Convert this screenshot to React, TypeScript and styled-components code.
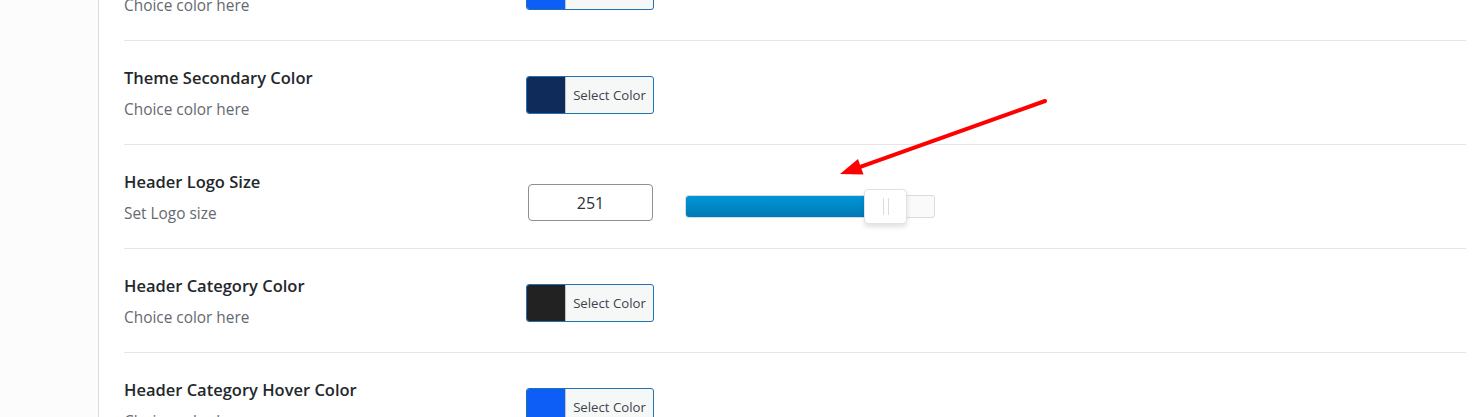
import styled, { createGlobalStyle } from "styled-components";

const GlobalStyle = createGlobalStyle`
  html, body {
    margin: 0;
    padding: 0;
    background: #ffffff;
    overflow: hidden;
  }
  body {
    font-family: "Open Sans", "Noto Sans", sans-serif;
    color: #333;
  }
`;

type ColorRow = { kind: "color"; title: string; sub: string; color: string };
type SizeRow = { kind: "size"; title: string; sub: string; value: number; max: number };
type Row = ColorRow | SizeRow;

const rows: Row[] = [
  { kind: "color", title: "Theme Primary Color", sub: "Choice color here", color: "#0d5ef7" },
  { kind: "color", title: "Theme Secondary Color", sub: "Choice color here", color: "#0f2b59" },
  { kind: "size", title: "Header Logo Size", sub: "Set Logo size", value: 251, max: 347 },
  { kind: "color", title: "Header Category Color", sub: "Choice color here", color: "#222222" },
  { kind: "color", title: "Header Category Hover Color", sub: "Choice color here", color: "#0d5ef7" },
];

const App = () => {
  return (
    <Page>
      <GlobalStyle />
      <Sidebar />
      <Main>
        <List>
          {rows.map((row) => (
            <SettingRow key={row.title}>
              <Label>
                <Title>{row.title}</Title>
                <Sub>{row.sub}</Sub>
              </Label>
              {row.kind === "color" ? (
                <ColorButton>
                  <Swatch $color={row.color} />
                  <ColorText>Select Color</ColorText>
                </ColorButton>
              ) : (
                <SizeControl>
                  <NumberBox>{row.value}</NumberBox>
                  <Track>
                    <Fill style={{ width: `${(row.value / row.max) * 100}%` }} />
                    <Handle style={{ left: `${(row.value / row.max) * 100}%` }}>
                      <Grip />
                    </Handle>
                  </Track>
                </SizeControl>
              )}
            </SettingRow>
          ))}
        </List>
        <Arrow width="240" height="100" viewBox="0 0 240 100">
          <line x1="222" y1="6" x2="38" y2="71.6" stroke="#ff0000" strokeWidth="4" strokeLinecap="round" />
          <polygon points="17,79 35,64 40.5,79.5" fill="#ff0000" />
        </Arrow>
      </Main>
    </Page>
  );
};

export default App;

const Page = styled.div`
  display: flex;
  width: 1476px;
  height: 417px;
  overflow: hidden;
`;

const Sidebar = styled.div`
  width: 98px;
  flex-shrink: 0;
  background: #fcfcfc;
  border-right: 1px solid #dddddd;
`;

const Main = styled.div`
  position: relative;
  flex: 1;
  padding: 0 10px 0 25px;
`;

const List = styled.div`
  margin-top: -63px;
`;

const SettingRow = styled.div`
  display: grid;
  grid-template-columns: 402px 1fr;
  align-items: start;
  height: 103px;
  border-bottom: 1px solid #e5e5e5;
`;

const Label = styled.div`
  display: flex;
  flex-direction: column;
  padding-top: 26px;
`;

const Title = styled.div`
  font-size: 16.5px;
  font-weight: 600;
  line-height: 22px;
  color: #23282d;
`;

const Sub = styled.div`
  margin-top: 11px;
  font-size: 15.4px;
  line-height: 20px;
  color: #646970;
`;

const ColorButton = styled.div`
  display: flex;
  margin-top: 35px;
  width: 128px;
  height: 38px;
  box-sizing: border-box;
  border: 1px solid #2271b1;
  border-radius: 3px;
  overflow: hidden;
  background: #f6f7f7;
`;

const Swatch = styled.div<{ $color: string }>`
  width: 38px;
  background: ${(p) => p.$color};
  border-right: 1px solid #c3c4c7;
`;

const ColorText = styled.div`
  flex: 1;
  display: flex;
  align-items: center;
  justify-content: center;
  font-size: 13.2px;
  color: #3c434a;
`;

const SizeControl = styled.div`
  display: flex;
  align-items: center;
  gap: 32px;
  margin-top: 39px;
  padding-left: 2px;
`;

const NumberBox = styled.div`
  width: 125px;
  height: 37px;
  box-sizing: border-box;
  border: 1px solid #8c8f94;
  border-radius: 4px;
  display: flex;
  align-items: center;
  justify-content: center;
  font-size: 16px;
  color: #2c3338;
`;

const Track = styled.div`
  position: relative;
  width: 250px;
  height: 23px;
  margin-top: 7px;
  box-sizing: border-box;
  border: 1px solid #d4dde4;
  border-radius: 3px;
  background: #fafafa;
`;

const Fill = styled.div`
  height: 100%;
  border-radius: 3px 0 0 3px;
  background: linear-gradient(#0096d8, #0079b4);
`;

const Handle = styled.div`
  position: absolute;
  top: -7px;
  margin-left: -1px;
  width: 43px;
  height: 35px;
  box-sizing: border-box;
  background: #ffffff;
  border: 1px solid #e2e2e2;
  border-radius: 4px;
  box-shadow: 0 3px 5px rgba(0, 0, 0, 0.12);
  display: flex;
  align-items: center;
  justify-content: center;
`;

const Grip = styled.div`
  width: 4px;
  height: 17px;
  border-left: 1px solid #dcdcdc;
  border-right: 1px solid #dcdcdc;
`;

const Arrow = styled.svg`
  position: absolute;
  left: 724px;
  top: 95px;
  pointer-events: none;
`;
